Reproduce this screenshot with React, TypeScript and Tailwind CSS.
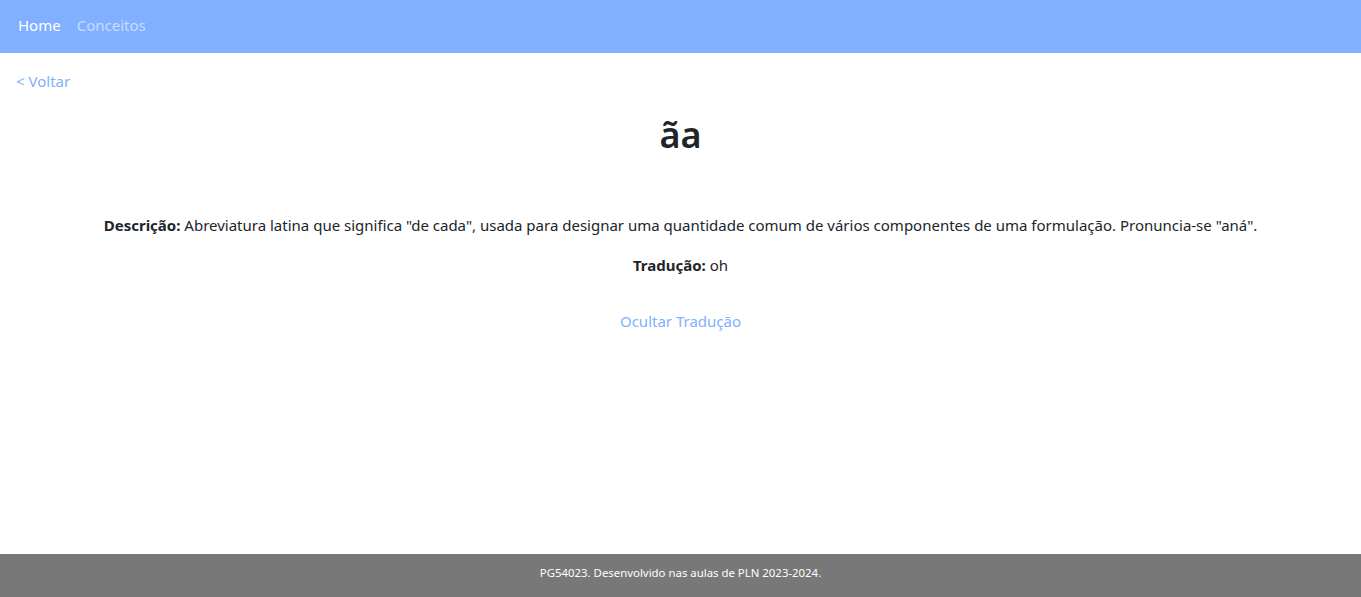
export default function App() {
  return (
    <div className="flex min-h-[597px] flex-col bg-white font-['Noto_Sans',sans-serif] text-[#212529]">
      <nav className="flex h-[53px] items-center gap-4 bg-[#80b0ff] px-[18px] pb-[2px] text-[15px]">
        <a className="text-white">Home</a>
        <a className="text-white/55">Conceitos</a>
      </nav>

      <main className="flex-1 px-4">
        <div className="pt-[16px]">
          <a className="text-[15px] leading-6 text-[#80b0ff]">&lt; Voltar</a>
        </div>
        <h1 className="mt-[15px] text-center text-[36px] font-semibold leading-[54px]">ãa</h1>
        <div className="mt-[51px] text-center text-[15px]">
          <p className="leading-6">
            <b className="font-bold">Descrição:</b> Abreviatura latina que significa "de cada", usada para designar uma
            quantidade comum de vários componentes de uma formulação. Pronuncia-se "aná".
          </p>
          <p className="mt-4 leading-6">
            <b className="font-bold">Tradução:</b> oh
          </p>
          <button className="mt-[32px] text-[15px] leading-6 text-[#80b0ff]">Ocultar Tradução</button>
        </div>
      </main>

      <footer className="flex h-[43px] items-center justify-center bg-[#787878] pb-[5px] text-[11.4px] text-white">
        PG54023. Desenvolvido nas aulas de PLN 2023-2024.
      </footer>
    </div>
  );
}
